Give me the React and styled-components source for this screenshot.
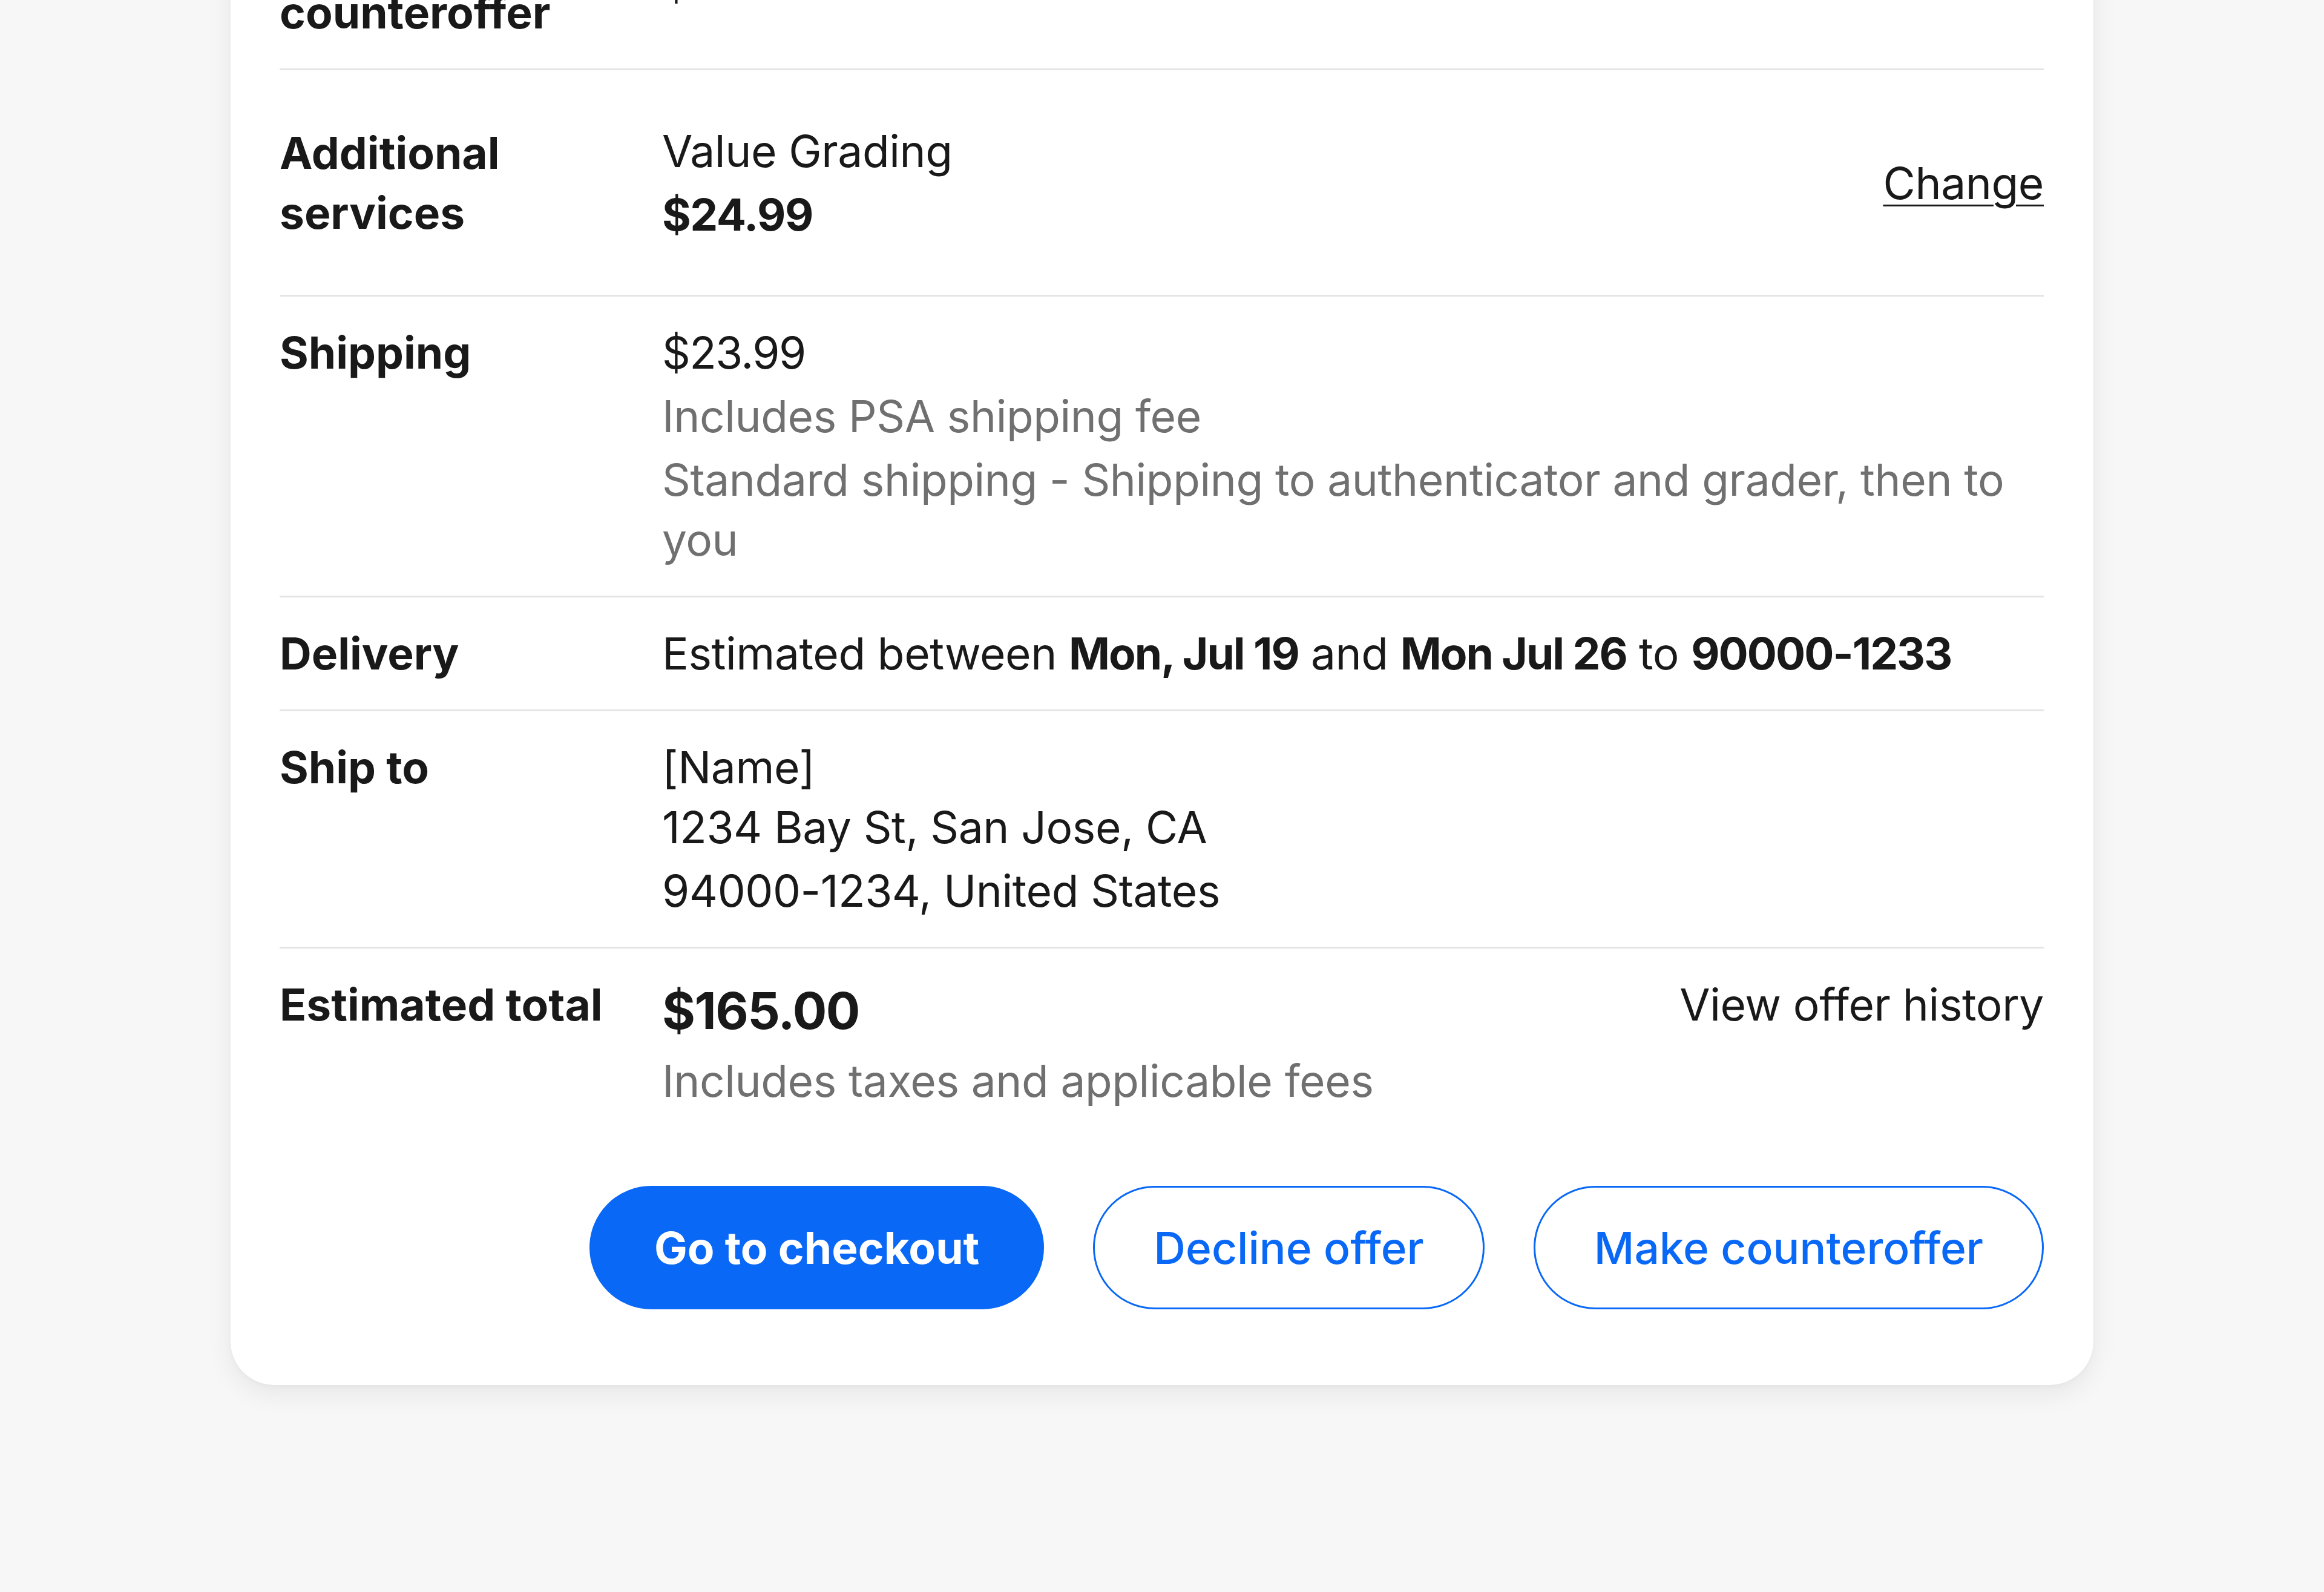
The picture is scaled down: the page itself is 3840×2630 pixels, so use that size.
import React from "react";
import styled, { createGlobalStyle } from "styled-components";

const GlobalStyle = createGlobalStyle`
  html, body {
    margin: 0;
    padding: 0;
    background: #f7f7f7;
  }
  body {
    font-family: Inter, "Noto Sans", "Liberation Sans", sans-serif;
    color: #191919;
    -webkit-font-smoothing: antialiased;
  }
  * { box-sizing: border-box; }
`;

const Page = styled.div`
  width: 3840px;
  height: 2630px;
  overflow: hidden;
  background: #f7f7f7;
  display: flex;
  flex-direction: column;
  align-items: center;
`;

const Card = styled.section`
  width: 3078px;
  margin-top: -171px;
  padding: 0 82px 125px 81px;
  background: #ffffff;
  border-radius: 72px;
  box-shadow: 0 14px 44px rgba(0, 0, 0, 0.07), 0 2px 8px rgba(0, 0, 0, 0.03);
`;

const Row = styled.div`
  display: grid;
  grid-template-columns: ${(p) => (p.$withAside ? "560px minmax(0, 1fr) auto" : "560px minmax(0, 1fr)")};
  column-gap: 72px;
  align-items: ${(p) => p.$align || "start"};
  padding: ${(p) => p.$padTop ?? 43}px 0 ${(p) => p.$padBottom ?? 43}px;
  border-top: ${(p) => (p.$first ? "none" : "3px solid #e5e5e5")};
`;

const Label = styled.div`
  font-size: 73px;
  line-height: 99px;
  font-weight: 700;
  color: #191919;
`;

const Value = styled.div`
  display: flex;
  flex-direction: column;
  gap: 6px;
  min-width: 0;
`;

const Text = styled.div`
  font-size: 73px;
  line-height: 99px;
  letter-spacing: ${(p) => (p.$tight ? "-1.5px" : "-0.4px")};
  font-weight: ${(p) => (p.$bold ? 700 : 400)};
  color: ${(p) => (p.$muted ? "#707070" : "#191919")};

  strong {
    font-weight: 700;
    letter-spacing: -2px;
  }
`;

const Total = styled.div`
  font-size: 84px;
  line-height: 120px;
  font-weight: 700;
  letter-spacing: -1.5px;
  color: #191919;
`;

const Aside = styled.a`
  align-self: ${(p) => p.$self || "start"};
  font-size: 73px;
  line-height: 99px;
  letter-spacing: -0.4px;
  color: #191919;
  white-space: nowrap;
  text-decoration: ${(p) => (p.$underline ? "underline" : "none")};
  text-decoration-thickness: 3px;
  text-underline-offset: 9px;
  cursor: pointer;
`;

const ActionBar = styled.div`
  display: flex;
  justify-content: flex-end;
  gap: 81px;
  margin-top: 124px;
`;

const Button = styled.button`
  height: 204px;
  padding: 0 ${(p) => (p.$primary ? 104 : 97)}px;
  border-radius: 102px;
  border: 3px solid #0968f6;
  background: ${(p) => (p.$primary ? "#0968f6" : "#ffffff")};
  color: ${(p) => (p.$primary ? "#ffffff" : "#0968f6")};
  font-family: Inter, "Noto Sans", "Liberation Sans", sans-serif;
  font-size: 73px;
  font-weight: ${(p) => (p.$primary ? 700 : 500)};
  line-height: 1;
  white-space: nowrap;
  cursor: pointer;
`;

export default function App() {
  return (
    <>
      <GlobalStyle />
      <Page>
        <Card>
          <Row $first $align="center">
            <Label>Your counteroffer</Label>
            <Value>
              <Text $tight>$150.00</Text>
            </Value>
          </Row>

          <Row $withAside $align="center" $padTop={84} $padBottom={83}>
            <Label>Additional services</Label>
            <Value>
              <Text>Value Grading</Text>
              <Text $bold $tight>$24.99</Text>
            </Value>
            <Aside $underline $self="center">
              Change
            </Aside>
          </Row>

          <Row>
            <Label>Shipping</Label>
            <Value>
              <Text $tight>$23.99</Text>
              <Text $muted>Includes PSA shipping fee</Text>
              <Text $muted>
                Standard shipping - Shipping to authenticator and grader, then to you
              </Text>
            </Value>
          </Row>

          <Row>
            <Label>Delivery</Label>
            <Value>
              <Text>
                Estimated between <strong>Mon, Jul 19</strong> and{" "}
                <strong>Mon Jul 26</strong> to <strong>90000-1233</strong>
              </Text>
            </Value>
          </Row>

          <Row>
            <Label>Ship to</Label>
            <Value>
              <Text>
                [Name]
                <br />
                1234 Bay St, San Jose, CA
              </Text>
              <Text>94000-1234, United States</Text>
            </Value>
          </Row>

          <Row $withAside $padBottom={0}>
            <Label>Estimated total</Label>
            <Value>
              <Total>$165.00</Total>
              <Text $muted>Includes taxes and applicable fees</Text>
            </Value>
            <Aside>View offer history</Aside>
          </Row>

          <ActionBar>
            <Button $primary>Go to checkout</Button>
            <Button>Decline offer</Button>
            <Button>Make counteroffer</Button>
          </ActionBar>
        </Card>
      </Page>
    </>
  );
}
